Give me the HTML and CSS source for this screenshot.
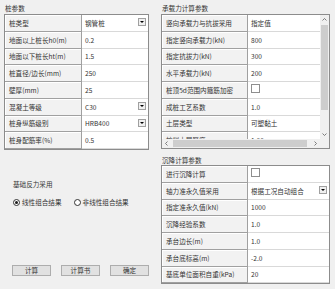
FILE: index.html
```html
<!DOCTYPE html>
<html>
<head>
    <title>桩参数</title>
    <link rel="stylesheet" href="styles.css">
</head>
<body>
<div class="page">
    <div class="col-left">
        <div class="caption">桩参数</div>
        <div class="grid-box pile">
            <div class="row"><div class="lbl">桩类型</div><div class="val">钢管桩<span class="drop"></span></div></div>
            <div class="row"><div class="lbl">地面以上桩长h0(m)</div><div class="val">0.2</div></div>
            <div class="row"><div class="lbl">地面以下桩长ht(m)</div><div class="val">1.5</div></div>
            <div class="row"><div class="lbl">桩直径/边长(mm)</div><div class="val">250</div></div>
            <div class="row"><div class="lbl">壁厚(mm)</div><div class="val">25</div></div>
            <div class="row"><div class="lbl">混凝土等级</div><div class="val">C30<span class="drop"></span></div></div>
            <div class="row"><div class="lbl">桩身纵筋级别</div><div class="val">HRB400<span class="drop"></span></div></div>
            <div class="row"><div class="lbl">桩身配筋率(%)</div><div class="val">0.5</div></div>
        </div>

        <div class="reaction">
            <div class="sub-caption">基础反力采用</div>
            <div class="radios">
                <label class="radio"><span class="dot on"></span>线性组合结果</label>
                <label class="radio"><span class="dot"></span>非线性组合结果</label>
            </div>
        </div>

        <div class="buttons">
            <button class="btn">计算</button>
            <button class="btn">计算书</button>
            <button class="btn">确定</button>
        </div>
    </div>

    <div class="col-right">
        <div class="caption">承载力计算参数</div>
        <div class="grid-box scroll-box">
            <div class="scroll-rows bearing">
                <div class="row"><div class="lbl">竖向承载力与抗拔采用</div><div class="val">指定值</div></div>
                <div class="row"><div class="lbl">指定竖向承载力(kN)</div><div class="val">800</div></div>
                <div class="row"><div class="lbl">指定抗拔力(kN)</div><div class="val">300</div></div>
                <div class="row"><div class="lbl">水平承载力(kN)</div><div class="val">200</div></div>
                <div class="row"><div class="lbl">桩顶5d范围内箍筋加密</div><div class="val"><span class="chk"></span></div></div>
                <div class="row"><div class="lbl">成桩工艺系数</div><div class="val">1.0</div></div>
                <div class="row"><div class="lbl">土层类型</div><div class="val">可塑黏土</div></div>
                <div class="row"><div class="lbl">桩侧土层厚度</div><div class="val">1.00</div></div>
            </div>
            <div class="vscroll">
                <span class="arrow"><svg width="5" height="3" viewBox="0 0 5 3"><path d="M0.5 2.5 L2.5 0.5 L4.5 2.5" fill="none" stroke="#606060" stroke-width="0.8"/></svg></span>
                <span class="track"><span class="thumb"></span></span>
                <span class="arrow"><svg width="5" height="3" viewBox="0 0 5 3"><path d="M0.5 0.5 L2.5 2.5 L4.5 0.5" fill="none" stroke="#606060" stroke-width="0.8"/></svg></span>
            </div>
            <div class="hscroll">
                <span class="arrow"><svg width="3" height="5" viewBox="0 0 3 5"><path d="M2.5 0.5 L0.5 2.5 L2.5 4.5" fill="none" stroke="#606060" stroke-width="0.8"/></svg></span>
                <span class="track"><span class="thumb"></span></span>
                <span class="arrow"><svg width="3" height="5" viewBox="0 0 3 5"><path d="M0.5 0.5 L2.5 2.5 L0.5 4.5" fill="none" stroke="#606060" stroke-width="0.8"/></svg></span>
            </div>
            <div class="corner"></div>
        </div>

        <div class="caption second">沉降计算参数</div>
        <div class="grid-box settle">
            <div class="row"><div class="lbl">进行沉降计算</div><div class="val"><span class="chk"></span></div></div>
            <div class="row"><div class="lbl">轴力准永久值采用</div><div class="val">根据工况自动组合<span class="drop"></span></div></div>
            <div class="row"><div class="lbl">指定准永久值(kN)</div><div class="val">1000</div></div>
            <div class="row"><div class="lbl">沉降经验系数</div><div class="val">1.0</div></div>
            <div class="row"><div class="lbl">承台边长(m)</div><div class="val">1.0</div></div>
            <div class="row"><div class="lbl">承台底标高(m)</div><div class="val">-2.0</div></div>
            <div class="row"><div class="lbl">基底单位面积自重(kPa)</div><div class="val">20</div></div>
        </div>
    </div>
</div>
</body>
</html>
```

FILE: styles.css
```css
body { margin: 0; background: #f0f0f0; font-family: "Noto Sans CJK SC", "Noto Sans", sans-serif; font-size: 6.6px; color: #333; }
.page { display: flex; width: 335px; height: 289px; padding-left: 4px; box-sizing: border-box; }
.col-left { width: 145px; display: flex; flex-direction: column; }
.col-right { width: 169px; margin-left: 12px; display: flex; flex-direction: column; }

.caption { height: 14px; padding: 3px 0 0 1px; line-height: 11px; box-sizing: border-box; }
.caption.second { height: 16px; padding-top: 6px; line-height: 10px; }

.grid-box { border: 1px solid #8c8c8c; background: #fff; box-sizing: border-box; }
.row { display: flex; height: 16.75px; }
.lbl { width: 72px; flex: none; padding-left: 4px; display: flex; align-items: center; background: #f2f2f2; border-right: 1px solid #a0a0a0; border-bottom: 1px solid #a0a0a0; box-shadow: inset 1px 1px #fff; white-space: nowrap; overflow: hidden; }
.val { flex: 1; display: flex; align-items: center; padding-left: 3px; background: #fff; border-bottom: 1px solid #d9d9d9; white-space: nowrap; }
.bearing .lbl, .settle .lbl { width: 81px; }

.drop { margin-left: auto; margin-right: 2px; align-self: flex-start; margin-top: 3px; width: 6px; height: 6px; border: 1px solid #a0a0a0; background: #f0f0f0; display: flex; align-items: center; justify-content: center; }
.drop::after { content: ""; border-left: 2px solid transparent; border-right: 2px solid transparent; border-top: 2px solid #000; }
.chk { width: 7px; height: 7px; border: 1px solid #8e8e8e; background: #fff; margin-top: -2px; }

.scroll-box { height: 135px; display: grid; grid-template-columns: 1fr 9px; grid-template-rows: 1fr 9px; }
.scroll-rows { overflow: hidden; }
.vscroll { display: flex; flex-direction: column; background: #f0f0f0; }
.vscroll .arrow { height: 9px; display: flex; align-items: center; justify-content: center; flex: none; }
.vscroll .track { flex: 1; padding: 1px 1px 0; }
.vscroll .thumb { display: block; height: 85px; background: #cdcdcd; }
.hscroll { display: flex; background: #f0f0f0; }
.hscroll .arrow { width: 9px; display: flex; align-items: center; justify-content: center; flex: none; }
.hscroll .track { flex: 1; padding: 1px 2px; }
.hscroll .thumb { display: block; height: 100%; width: 134px; background: #cdcdcd; }
.corner { background: #f0f0f0; }

.settle { height: 119px; }

.reaction { margin-top: 29px; padding-left: 9px; }
.sub-caption { line-height: 10px; }
.radios { display: flex; margin-top: 8px; }
.radio { display: flex; align-items: center; margin-right: 12px; }
.dot { width: 5px; height: 5px; border: 1px solid #333; border-radius: 50%; margin-right: 2px; display: flex; align-items: center; justify-content: center; background: #fff; }
.dot.on::after { content: ""; width: 3px; height: 3px; border-radius: 50%; background: #1a1a1a; }

.buttons { margin-top: auto; margin-bottom: 13px; padding-left: 8px; display: flex; gap: 10px; }
.btn { width: 40px; height: 11px; padding: 0; font: inherit; color: #333; background: #e1e1e1; border: 1px solid #adadad; line-height: 9px; }
```
